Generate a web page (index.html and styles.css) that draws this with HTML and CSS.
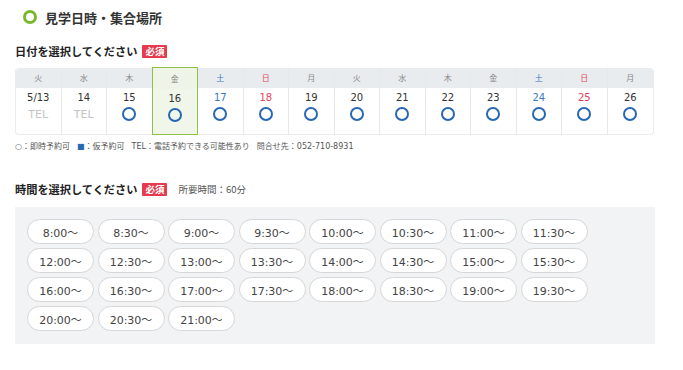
FILE: index.html
```html
<!DOCTYPE html>
<html lang="ja">
<head>
  <meta charset="UTF-8">
  <title>見学日時・集合場所</title>
  <link rel="stylesheet" href="styles.css">
</head>
<body>
  <div class="page">
    <h1 class="section-title"><span class="ring"></span>見学日時・集合場所</h1>

    <h2 class="field-label">日付を選択してください <span class="required">必須</span></h2>
    <div class="calendar">
      <div class="day"><div class="dow">火</div><div class="cell"><span class="num">5/13</span><span class="tel">TEL</span></div></div>
      <div class="day"><div class="dow">水</div><div class="cell"><span class="num">14</span><span class="tel">TEL</span></div></div>
      <div class="day"><div class="dow">木</div><div class="cell"><span class="num">15</span><span class="ok"></span></div></div>
      <div class="day selected"><div class="dow">金</div><div class="cell"><span class="num">16</span><span class="ok"></span></div></div>
      <div class="day sat"><div class="dow">土</div><div class="cell"><span class="num">17</span><span class="ok"></span></div></div>
      <div class="day sun"><div class="dow">日</div><div class="cell"><span class="num">18</span><span class="ok"></span></div></div>
      <div class="day"><div class="dow">月</div><div class="cell"><span class="num">19</span><span class="ok"></span></div></div>
      <div class="day"><div class="dow">火</div><div class="cell"><span class="num">20</span><span class="ok"></span></div></div>
      <div class="day"><div class="dow">水</div><div class="cell"><span class="num">21</span><span class="ok"></span></div></div>
      <div class="day"><div class="dow">木</div><div class="cell"><span class="num">22</span><span class="ok"></span></div></div>
      <div class="day"><div class="dow">金</div><div class="cell"><span class="num">23</span><span class="ok"></span></div></div>
      <div class="day sat"><div class="dow">土</div><div class="cell"><span class="num">24</span><span class="ok"></span></div></div>
      <div class="day sun"><div class="dow">日</div><div class="cell"><span class="num">25</span><span class="ok"></span></div></div>
      <div class="day last"><div class="dow">月</div><div class="cell"><span class="num">26</span><span class="ok"></span></div></div>
    </div>
    <p class="legend">
      <span>○：即時予約可</span>
      <span><span class="sq">■</span>：仮予約可</span>
      <span>TEL：電話予約できる可能性あり</span>
      <span>問合せ先：052-710-8931</span>
    </p>

    <h2 class="field-label time-label">時間を選択してください <span class="required">必須</span> <span class="duration">所要時間：60分</span></h2>
    <div class="times">
      <div class="time-grid">
        <button>8:00～</button>
        <button>8:30～</button>
        <button>9:00～</button>
        <button>9:30～</button>
        <button>10:00～</button>
        <button>10:30～</button>
        <button>11:00～</button>
        <button>11:30～</button>
        <button>12:00～</button>
        <button>12:30～</button>
        <button>13:00～</button>
        <button>13:30～</button>
        <button>14:00～</button>
        <button>14:30～</button>
        <button>15:00～</button>
        <button>15:30～</button>
        <button>16:00～</button>
        <button>16:30～</button>
        <button>17:00～</button>
        <button>17:30～</button>
        <button>18:00～</button>
        <button>18:30～</button>
        <button>19:00～</button>
        <button>19:30～</button>
        <button>20:00～</button>
        <button>20:30～</button>
        <button>21:00～</button>
      </div>
    </div>
  </div>
</body>
</html>
```

FILE: styles.css
```css
body {
  margin: 0;
  background-color: #fff;
  color: #333;
  font-family: "DejaVu Sans", "Noto Sans CJK JP", sans-serif;
}

.page {
  width: 640px;
  padding: 7px 0 0 15px;
}

.section-title {
  display: flex;
  align-items: center;
  gap: 8px;
  margin: 0 0 0 8px;
  height: 20px;
  font-family: "Noto Sans CJK JP", sans-serif;
  font-size: 13px;
  font-weight: bold;
  color: #333;
}

.ring {
  width: 8px;
  height: 8px;
  border: 3px solid #78b82a;
  border-radius: 50%;
}

.field-label {
  display: flex;
  align-items: center;
  margin: 16px 0 0;
  height: 16px;
  font-family: "Noto Sans CJK JP", sans-serif;
  font-size: 11.2px;
  font-weight: bold;
  color: #222;
}

.required {
  margin-left: 5px;
  padding: 0 3px;
  height: 13px;
  line-height: 13px;
  background-color: #e63a4e;
  color: #fff;
  font-size: 9.5px;
  font-weight: bold;
  border-radius: 1px;
}

.duration {
  margin-left: 11px;
  font-size: 9.5px;
  font-weight: normal;
  color: #555;
}

.calendar {
  display: grid;
  grid-template-columns: repeat(14, 1fr);
  margin-top: 9px;
  width: 639px;
  border: 1px solid #ebebeb;
  border-top: none;
  border-radius: 4px;
  box-sizing: border-box;
}

.day {
  display: flex;
  flex-direction: column;
  border-right: 1px solid #e8e8e8;
}

.day.last {
  border-right: none;
}

.dow {
  height: 20px;
  line-height: 20px;
  text-align: center;
  background-color: #e9ecee;
  font-family: "Noto Sans CJK JP", sans-serif;
  font-size: 8px;
  color: #888;
}

.day:first-child .dow {
  border-top-left-radius: 4px;
}

.day.last .dow {
  border-top-right-radius: 4px;
}

.cell {
  display: flex;
  flex-direction: column;
  align-items: center;
  height: 45px;
  padding-top: 2px;
  box-sizing: border-box;
}

.num {
  font-size: 10px;
  line-height: 16px;
  color: #333;
}

.tel {
  margin-top: 1px;
  font-size: 11px;
  line-height: 16px;
  color: #c4c4c4;
}

.ok {
  margin-top: 1px;
  width: 10px;
  height: 10px;
  border: 2px solid #2767b3;
  border-radius: 50%;
}

.sat .dow, .sat .num {
  color: #3a78c4;
}

.sun .dow, .sun .num {
  color: #e0455c;
}

.selected {
  margin: -1px 0 -1px -1px;
  border: 1px solid #8cc14a;
  background-color: #f1f6ea;
}

.selected .dow {
  background-color: #eff4e9;
  height: 21px;
  line-height: 21px;
}

.legend {
  display: flex;
  gap: 7px;
  margin: 6px 0 0;
  font-size: 8px;
  line-height: 12px;
  color: #555;
}

.sq {
  color: #2767b3;
}

.time-label {
  margin-top: 28px;
}

.times {
  margin-top: 10px;
  width: 640px;
  padding: 12px 12px 13px;
  box-sizing: border-box;
  background-color: #f2f3f5;
}

.time-grid {
  display: grid;
  grid-template-columns: repeat(8, 67px);
  column-gap: 3.5px;
  row-gap: 4px;
}

.time-grid button {
  height: 25px;
  padding: 0;
  background-color: #fff;
  border: 1px solid #d6d6d6;
  border-radius: 13px;
  font-family: "DejaVu Sans", "Noto Sans CJK JP", sans-serif;
  font-size: 11px;
  color: #444;
  cursor: pointer;
}
```
